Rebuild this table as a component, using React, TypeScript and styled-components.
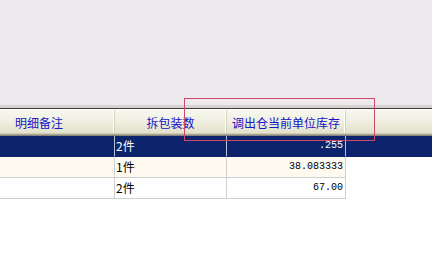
import React from "react";
import styled, { createGlobalStyle } from "styled-components";

const GlobalStyle = createGlobalStyle`
  html, body {
    margin: 0;
    padding: 0;
    background: #eee9ec;
    overflow: hidden;
  }
`;

const Page = styled.div`
  position: relative;
  width: 432px;
  height: 261px;
  display: flex;
  flex-direction: column;
  background: #ffffff;
  font-family: "Noto Sans CJK SC", "Liberation Sans", sans-serif;
  font-size: 12px;
`;

const TopArea = styled.div`
  flex: 0 0 105px;
  background: #eee9ec;
`;

// splitter between the upper panel and the detail grid
const Splitter = styled.div`
  flex: 0 0 5px;
  box-sizing: border-box;
  background: #d6d3d0;
  border-bottom: 1px solid #ffffff;
  box-shadow: inset 0 -1px 0 #3c3c3c;
`;

const Grid = styled.div`
  flex: 1;
  overflow: hidden;
  background: #ffffff;
`;

// grid is scrolled to the right a little
const Scroller = styled.div`
  margin-left: -36px;
  display: flex;
  flex-direction: column;
`;

const HeaderRow = styled.div`
  display: flex;
  height: 26px;
  box-sizing: border-box;
  background: linear-gradient(
    to bottom,
    #f8f8f0 0px,
    #efeee0 12px,
    #e3e2cc 22px,
    #e3e2cc 23px,
    #cfcdb8 23px,
    #cfcdb8 24px,
    #a9a794 24px,
    #a9a794 25px,
    #86857c 25px
  );
`;

const HeaderCell = styled.div<{ $w: number }>`
  flex: 0 0 ${(p) => p.$w}px;
  box-sizing: border-box;
  height: 23px;
  padding-top: 6px;
  border-right: 1px solid #d3d0bd;
  box-shadow: inset -1px 0 0 #ffffff;
  color: #1414c8;
  text-align: center;
  line-height: 14px;
  white-space: nowrap;
`;

const Row = styled.div<{ $selected?: boolean }>`
  display: flex;
  height: 21px;
  background: ${(p) => (p.$selected ? "#0b246b" : "#ffffff")};
`;

const Cell = styled.div<{
  $w: number;
  $selected?: boolean;
  $cream?: boolean;
  $num?: boolean;
}>`
  flex: 0 0 ${(p) => p.$w}px;
  box-sizing: border-box;
  height: 21px;
  padding: ${(p) => (p.$num ? "4px 2px 0 0" : "2px 0 0 1px")};
  border-right: 1px solid ${(p) => (p.$selected ? "#b8c0d8" : "#cfcfcf")};
  border-bottom: 1px solid ${(p) => (p.$selected ? "#0b246b" : "#cfcfcf")};
  background: ${(p) =>
    p.$selected ? "#0b246b" : p.$cream ? "#fffaf0" : "#ffffff"};
  color: ${(p) => (p.$selected ? "#ffffff" : "#000000")};
  text-align: ${(p) => (p.$num ? "right" : "left")};
  font-family: ${(p) =>
    p.$num
      ? '"Liberation Mono", monospace'
      : '"Noto Sans CJK SC", "Liberation Sans", sans-serif'};
  font-size: ${(p) => (p.$num ? "10px" : "12px")};
  line-height: ${(p) => (p.$num ? "12px" : "15px")};
  white-space: nowrap;
`;

// red annotation box drawn over the header
const Marker = styled.div`
  position: absolute;
  left: 184px;
  top: 98px;
  width: 191px;
  height: 43px;
  box-sizing: border-box;
  border: 1px solid #d04868;
  pointer-events: none;
`;

const COLS = [151, 112, 119];

const rows = [
  { pack: "2件", stock: ".255", selected: true },
  { pack: "1件", stock: "38.083333", cream: true },
  { pack: "2件", stock: "67.00" },
];

const App: React.FC = () => {
  return (
    <>
      <GlobalStyle />
      <Page>
        <TopArea />
        <Splitter />
        <Grid>
          <Scroller>
            <HeaderRow>
              <HeaderCell $w={COLS[0]}>明细备注</HeaderCell>
              <HeaderCell $w={COLS[1]}>拆包装数</HeaderCell>
              <HeaderCell $w={COLS[2]}>调出仓当前单位库存</HeaderCell>
            </HeaderRow>
            {rows.map((r, i) => (
              <Row key={i} $selected={r.selected}>
                <Cell $w={COLS[0]} $selected={r.selected} $cream={r.cream} />
                <Cell $w={COLS[1]} $selected={r.selected} $cream={r.cream}>
                  {r.pack}
                </Cell>
                <Cell $w={COLS[2]} $selected={r.selected} $cream={r.cream} $num>
                  {r.stock}
                </Cell>
              </Row>
            ))}
          </Scroller>
        </Grid>
        <Marker />
      </Page>
    </>
  );
};

export default App;
